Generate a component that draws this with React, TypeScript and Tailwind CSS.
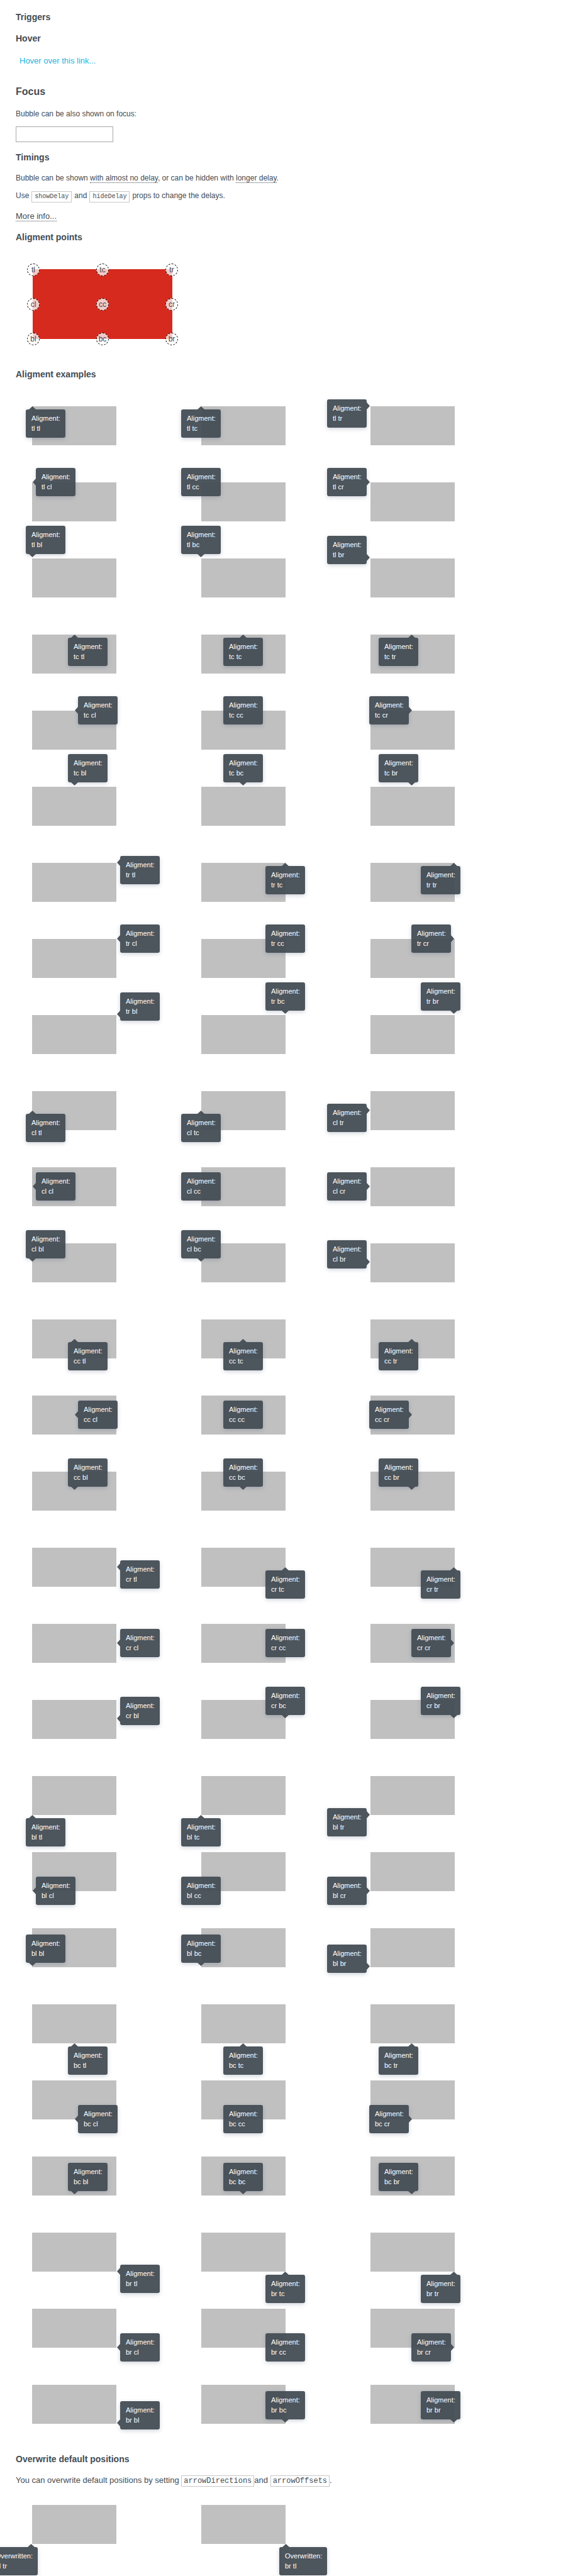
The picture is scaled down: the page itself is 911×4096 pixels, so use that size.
import type { ReactNode } from "react";

type V = "t" | "c" | "b";
type H = "l" | "c" | "r";
type Point = `${V}${H}`;
type Direction = "up" | "down" | "left" | "right" | "none";

const POINTS: Point[] = ["tl", "tc", "tr", "cl", "cc", "cr", "bl", "bc", "br"];
const ROWS: Point[][] = [
  ["tl", "tc", "tr"],
  ["cl", "cc", "cr"],
  ["bl", "bc", "br"],
];

const ANCHOR: Record<Point, string> = {
  tl: "left-0 top-0",
  tc: "left-1/2 top-0",
  tr: "left-full top-0",
  cl: "left-0 top-1/2",
  cc: "left-1/2 top-1/2",
  cr: "left-full top-1/2",
  bl: "left-0 top-full",
  bc: "left-1/2 top-full",
  br: "left-full top-full",
};

// Bubble placement around its anchor for arrows pointing up or down.
const PLACE: Record<Point, string> = {
  tl: "-left-[10px] top-[5px]",
  tc: "-left-[32px] top-[5px]",
  tr: "-right-[9px] top-[5px]",
  cl: "left-[6px] -top-[23px]",
  cc: "-left-[32px] -top-[23px]",
  cr: "right-[6px] -top-[23px]",
  bl: "-left-[10px] bottom-[7px]",
  bc: "-left-[32px] bottom-[7px]",
  br: "-right-[9px] bottom-[7px]",
};

// Placement when a corner of the bubble sits beside the target.
const PLACE_SIDE: Partial<Record<Point, string>> = {
  tl: "left-[6px] -top-[11px]",
  tr: "right-[6px] -top-[11px]",
  bl: "left-[6px] -bottom-[9px]",
  br: "right-[6px] -bottom-[9px]",
};

const ARROW: Record<Exclude<Direction, "none">, string> = {
  up: "-top-[5px] w-[11px] h-[5px] [clip-path:polygon(50%_0,100%_100%,0_100%)]",
  down: "-bottom-[5px] w-[11px] h-[5px] [clip-path:polygon(0_0,100%_0,50%_100%)]",
  left: "-left-[5px] w-[5px] h-[11px] [clip-path:polygon(0_50%,100%_0,100%_100%)]",
  right: "-right-[5px] w-[5px] h-[11px] [clip-path:polygon(0_0,100%_50%,0_100%)]",
};

const ALONG_X: Record<H, string> = {
  l: "left-[5px]",
  c: "left-[26px]",
  r: "right-[5px]",
};
const ALONG_Y: Record<V, string> = {
  t: "top-[5px]",
  c: "top-[17px]",
  b: "bottom-[5px]",
};

function directionFor(target: Point, bubble: Point): Direction {
  if (bubble === "cc") return "none";
  if (bubble === "cl") return "left";
  if (bubble === "cr") return "right";
  if (target[1] === "l" && bubble[1] === "r") return "right";
  if (target[1] === "r" && bubble[1] === "l") return "left";
  return bubble[0] === "t" ? "up" : "down";
}

function Bubble({ target, bubble, title, direction }: { target: Point; bubble: Point; title: string; direction?: Direction }) {
  const dir = direction ?? directionFor(target, bubble);
  const sideways = dir === "left" || dir === "right";
  const place = (sideways && PLACE_SIDE[bubble]) || PLACE[bubble];
  const along = sideways ? ALONG_Y[bubble[0] as V] : ALONG_X[bubble[1] as H];
  return (
    <div className={`absolute size-0 ${ANCHOR[target]}`}>
      <div
        role="tooltip"
        className={`absolute min-w-[63px] whitespace-nowrap rounded-[3px] bg-[#434c54]/95 pt-[6px] pr-[8px] pb-[7px] pl-[9px] text-[11px] leading-4 text-white shadow-[0_2px_6px_rgba(60,80,110,0.25)] ${place}`}
      >
        {dir !== "none" && <span className={`absolute bg-[#434c54]/95 ${ARROW[dir]} ${along}`} />}
        {title}
        <br />
        {target} {bubble}
      </div>
    </div>
  );
}

function Target({ children }: { children: ReactNode }) {
  return <div className="relative h-[62px] w-[134px] bg-[#c0c0c0]">{children}</div>;
}

function Heading({ children, className }: { children: ReactNode; className: string }) {
  return <h3 className={`text-[14px] leading-5 font-bold ${className}`}>{children}</h3>;
}

function Code({ children, className }: { children: ReactNode; className: string }) {
  return (
    <code className={`inline-block border border-[#c8c8c8] font-['Liberation_Mono',monospace] leading-4 ${className}`}>
      {children}
    </code>
  );
}

function Hint({ children }: { children: ReactNode }) {
  return <span className="border-b border-dotted border-[#434c54]">{children}</span>;
}

export default function App() {
  return (
    <main className="overflow-hidden bg-white px-[25px] pt-[17px] pb-[50px] font-['Liberation_Sans',Arial,sans-serif] text-[12px] leading-4 text-[#434c54]">
      <Heading className="">Triggers</Heading>
      <Heading className="mt-[14px]">Hover</Heading>
      <p className="mt-[18px] pl-[6px] text-[13px] leading-4">
        <a href="#hover" className="text-[#1eb4e0]">
          Hover over this link...
        </a>
      </p>

      <h2 className="mt-[31px] text-[16px] leading-5 font-bold">Focus</h2>
      <label htmlFor="focus-input" className="mt-[17px] block">
        Bubble can be also shown on focus:
      </label>
      <input id="focus-input" type="text" className="mt-3 block h-[25px] w-[155px] border border-[#a9a9a9] px-1 outline-none" />

      <Heading className="mt-[14px]">Timings</Heading>
      <p className="mt-[15px]">
        Bubble can be shown <Hint>with almost no delay</Hint>, or can be hidden with <Hint>longer delay</Hint>.
      </p>
      <p className="mt-3 flex h-[18px] items-baseline gap-1">
        Use <Code className="px-1 text-[10px]">showDelay</Code> and <Code className="px-1 text-[10px]">hideDelay</Code> props to change the delays.
      </p>
      <p className="mt-[15px] text-[13px] leading-4">
        <Hint>More info...</Hint>
      </p>

      <Heading className="mt-[15px]">Aligment points</Heading>
      <div className="relative mt-[41px] ml-[27px] h-[111px] w-[222px] bg-[#d62a1e]">
        <div className="absolute -top-[9px] -right-[9px] -bottom-[10px] -left-[9px] grid grid-cols-[repeat(3,20px)] content-between justify-between">
          {POINTS.map((point) => (
            <span
              key={point}
              className="flex size-5 items-center justify-center rounded-full border border-dashed border-black bg-white/75 text-[12px] leading-4"
            >
              {point}
            </span>
          ))}
        </div>
      </div>

      <Heading className="mt-[46px]">Aligment examples</Heading>
      <div className="mt-[41px] ml-[26px] flex flex-col gap-[59px]">
        {POINTS.map((target) => (
          <section key={target} className="flex flex-col gap-[59px]">
            {ROWS.map((row) => (
              <div key={row[0]} className="flex gap-[135px]">
                {row.map((bubble) => (
                  <Target key={bubble}>
                    <Bubble target={target} bubble={bubble} title="Aligment:" />
                  </Target>
                ))}
              </div>
            ))}
          </section>
        ))}
      </div>

      <Heading className="mt-[46px]">Overwrite default positions</Heading>
      <p className="mt-4 flex h-[18px] items-baseline text-[13px] leading-4">
        You can overwrite default positions by setting&nbsp;
        <Code className="px-[3px] text-[12px]">arrowDirections</Code>and&nbsp;
        <Code className="px-[3px] text-[12px]">arrowOffsets</Code>.
      </p>
      <div className="mt-[29px] ml-[26px] flex gap-[135px]">
        <Target>
          <Bubble target="bl" bubble="tr" title="Overwritten:" direction="up" />
        </Target>
        <Target>
          <Bubble target="br" bubble="tl" title="Overwritten:" direction="up" />
        </Target>
      </div>
    </main>
  );
}
